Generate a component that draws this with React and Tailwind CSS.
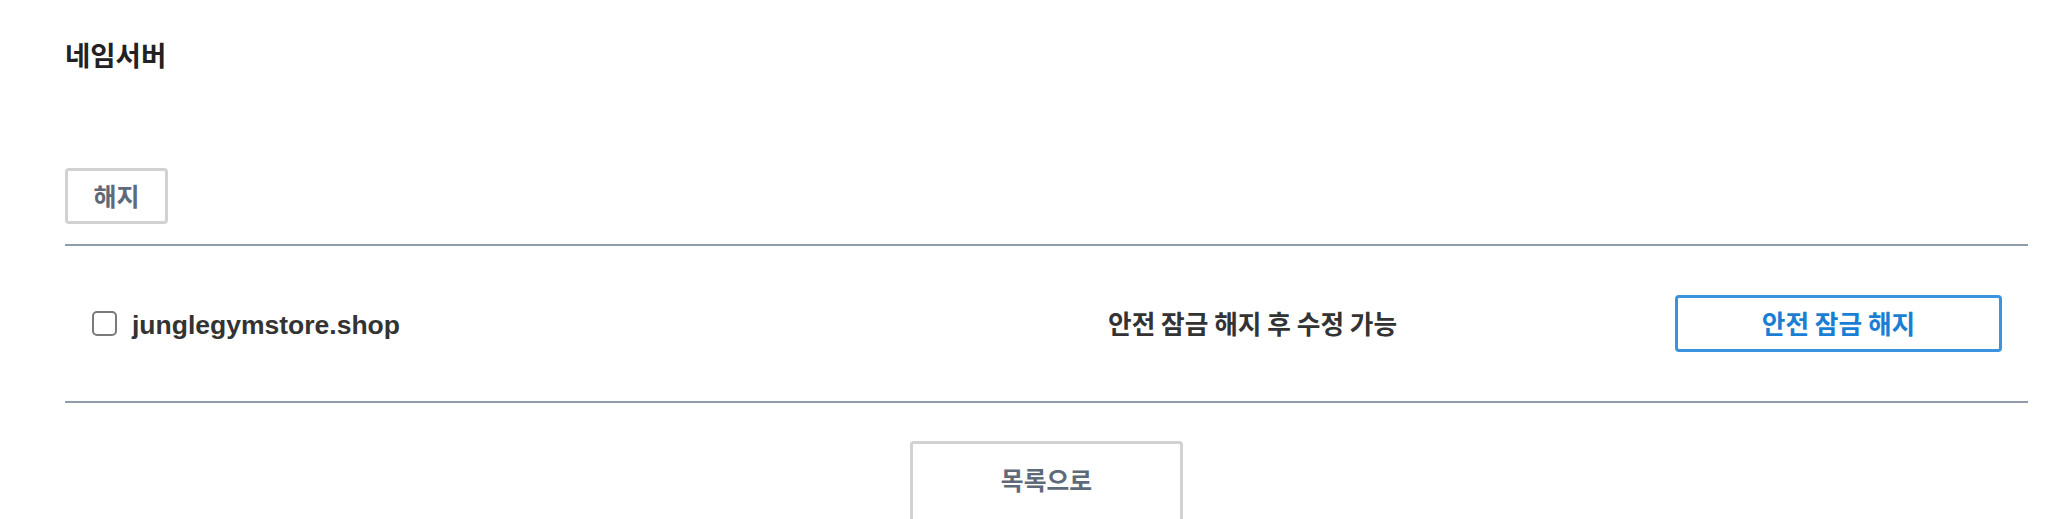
import React from "react";

const KR = { fontFamily: '"Noto Sans CJK KR", "Noto Sans", sans-serif' };

export default function App() {
  return (
    <div className="bg-white w-full h-[519px] overflow-hidden pl-[65px] pr-[20px] pt-[36px]" style={KR}>
      <h2 className="text-[27.5px] leading-[36px] font-bold text-[#222]">네임서버</h2>
      <div className="mt-[96px]">
        <button className="w-[103px] h-[56px] border-[3px] border-[#d2d2d2] rounded-[4px] bg-white text-[25px] font-bold text-[#5e6a79] flex items-center justify-center">
          해지
        </button>
      </div>
      <div className="mt-[20px] border-t-2 border-[#8f9daa]" />
      <div className="h-[155px] flex items-center">
        <div className="w-[1043px] flex items-center">
          <span className="ml-[27px] w-[25px] h-[25px] border-2 border-[#7a7a7a] rounded-[5px] bg-white" />
          <span
            className="ml-[15px] text-[26.5px] font-bold text-[#333] relative top-[2px]"
            style={{ fontFamily: '"Liberation Sans", Arial, sans-serif' }}
          >
            junglegymstore.shop
          </span>
        </div>
        <div className="flex-1 text-[25.7px] font-bold text-[#333]">안전 잠금 해지 후 수정 가능</div>
        <button className="mr-[26px] w-[327px] h-[57px] border-[3.5px] border-[#3b93de] rounded-[4px] bg-white text-[25.7px] font-bold text-[#1a7ed4] flex items-center justify-center">
          안전 잠금 해지
        </button>
      </div>
      <div className="border-t-2 border-[#8f9daa]" />
      <div className="mt-[38px] flex justify-center">
        <button className="w-[273px] h-[100px] border-[3px] border-[#d2d2d2] rounded-[4px] bg-white text-[24.8px] font-bold text-[#5e6a79] flex items-start justify-center pt-[17px]">
          목록으로
        </button>
      </div>
    </div>
  );
}
